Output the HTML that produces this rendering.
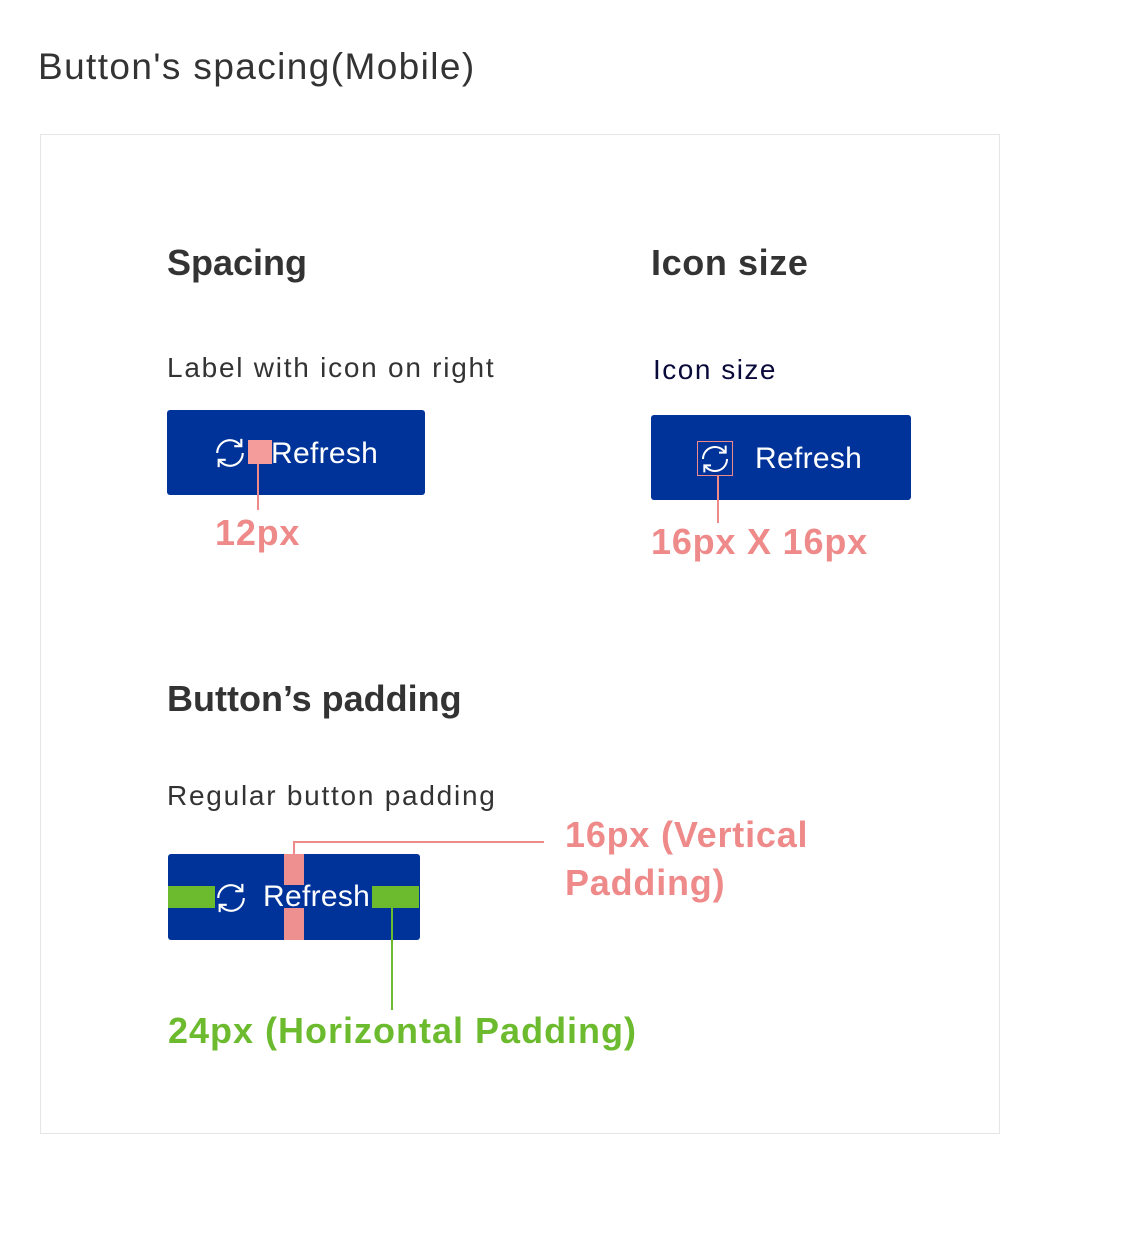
<!DOCTYPE html>
<html><head><meta charset="utf-8"><style>
body{margin:0;width:1140px;height:1242px;background:#fff;position:relative;font-family:"Liberation Sans",sans-serif;overflow:hidden}
.a{position:absolute;white-space:nowrap;line-height:1}
.btn{position:absolute;background:#003399;border-radius:3px}
.pk{color:#ef8a8a;font-weight:bold;font-size:36px;letter-spacing:0.8px}
.gr{color:#6cbb2e;font-weight:bold;font-size:36px;letter-spacing:1px}
.h{font-weight:bold;font-size:36px;color:#333}
.l{font-size:28px;color:#333;letter-spacing:1.75px}
.r{position:absolute}
.t{color:#fff;font-size:30px;letter-spacing:0.3px}
</style></head><body>
<div class="a" style="left:38px;top:48px;font-size:37px;color:#333;letter-spacing:1.4px">Button's spacing(Mobile)</div>
<div class="r" style="left:40px;top:134px;width:958px;height:998px;border:1px solid #e6e6e6"></div>

<div class="a h" style="left:167px;top:245px">Spacing</div>
<div class="a h" style="left:651px;top:245px;letter-spacing:0.6px">Icon size</div>
<div class="a l" style="left:167px;top:354px">Label with icon on right</div>
<div class="a l" style="left:653px;top:356px;color:#0a0a3a;letter-spacing:1.5px">Icon size</div>

<!-- button 1 -->
<div class="btn" style="left:167px;top:410px;width:258px;height:85px"></div>
<svg class="r" style="left:213px;top:436px" width="34" height="34" viewBox="0 0 24 24" fill="none" stroke="#fff" stroke-width="1.5"><path d="M3 12 A9 9 0 0 1 19.5 7"/><path d="M20 2 V7.2 H15"/><path d="M21 12 A9 9 0 0 1 4.5 17"/><path d="M4 22 V16.8 H9"/></svg>
<div class="r" style="left:248px;top:440px;width:24px;height:24px;background:#f49b9b"></div>
<div class="a t" style="left:271px;top:439px">Refresh</div>
<div class="r" style="left:257px;top:464px;width:2px;height:46px;background:#ef8a8a"></div>
<div class="a pk" style="left:215px;top:515px">12px</div>

<!-- button 2 -->
<div class="btn" style="left:651px;top:415px;width:260px;height:85px"></div>
<svg class="r" style="left:699px;top:443px" width="32" height="32" viewBox="0 0 24 24" fill="none" stroke="#fff" stroke-width="1.5"><path d="M3 12 A9 9 0 0 1 19.5 7"/><path d="M20 2 V7.2 H15"/><path d="M21 12 A9 9 0 0 1 4.5 17"/><path d="M4 22 V16.8 H9"/></svg>
<div class="r" style="left:697px;top:441px;width:36px;height:35px;border:1.5px solid #ef8a8a;box-sizing:border-box"></div>
<div class="a t" style="left:755px;top:444px">Refresh</div>
<div class="r" style="left:717px;top:476px;width:2px;height:47px;background:#ef8a8a"></div>
<div class="a pk" style="left:651px;top:524px">16px X 16px</div>

<div class="a h" style="left:167px;top:681px">Button’s padding</div>
<div class="a l" style="left:167px;top:782px">Regular button padding</div>

<!-- button 3 -->
<div class="btn" style="left:168px;top:854px;width:252px;height:86px"></div>
<div class="r" style="left:284px;top:854px;width:20px;height:31px;background:#ef9090"></div>
<div class="r" style="left:284px;top:908px;width:20px;height:32px;background:#ef9090"></div>
<div class="r" style="left:168px;top:886px;width:47px;height:22px;background:#6cbb2e"></div>
<div class="r" style="left:372px;top:886px;width:47px;height:22px;background:#6cbb2e"></div>
<svg class="r" style="left:214px;top:881px" width="34" height="34" viewBox="0 0 24 24" fill="none" stroke="#fff" stroke-width="1.5"><path d="M3 12 A9 9 0 0 1 19.5 7"/><path d="M20 2 V7.2 H15"/><path d="M21 12 A9 9 0 0 1 4.5 17"/><path d="M4 22 V16.8 H9"/></svg>
<div class="a t" style="left:263px;top:882px">Refresh</div>
<div class="r" style="left:293px;top:841px;width:251px;height:2px;background:#ef8a8a"></div>
<div class="r" style="left:293px;top:841px;width:2px;height:13px;background:#ef8a8a"></div>
<div class="r" style="left:391px;top:908px;width:2px;height:102px;background:#6cbb2e"></div>
<div class="a pk" style="left:565px;top:817px">16px (Vertical</div>
<div class="a pk" style="left:565px;top:865px">Padding)</div>
<div class="a gr" style="left:168px;top:1013px">24px (Horizontal Padding)</div>
</body></html>
